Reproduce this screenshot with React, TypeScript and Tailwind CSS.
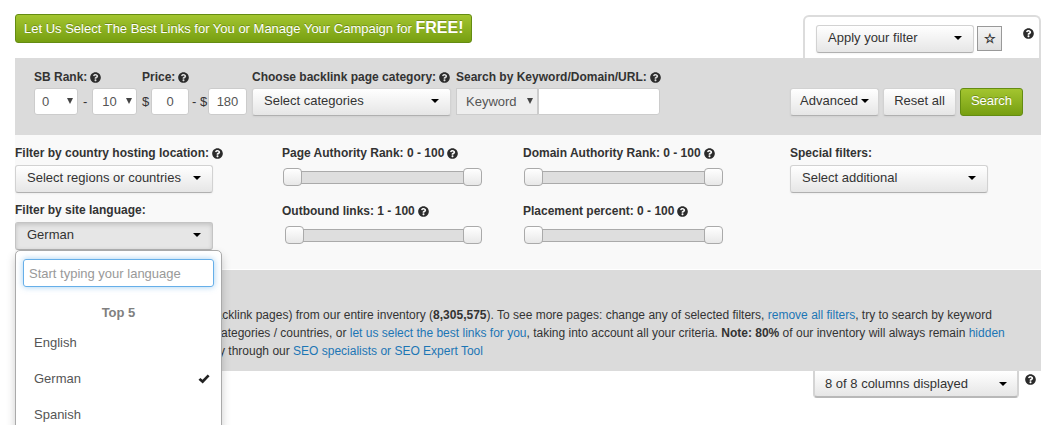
import { useState, type ReactNode } from "react";
import { FaQuestionCircle } from "react-icons/fa";

const greenButton =
  "rounded-[3px] border border-[#648c12] bg-gradient-to-b from-[#a3c52f] to-[#779f10] text-white [text-shadow:0_-1px_0_rgba(0,0,0,0.25)]";
const grayButton =
  "h-7 rounded-[3px] border border-[#d2d2d2] border-b-[#b0b0b0] bg-gradient-to-b from-white to-[#e6e6e6] pb-[2px] text-[#333] shadow-[0_1px_2px_rgba(0,0,0,0.05)]";

function Help() {
  return (
    <button type="button" aria-label="Help" className="shrink-0">
      <FaQuestionCircle className="size-[11px] text-[#2b2b2b]" />
    </button>
  );
}

function Caret() {
  return (
    <svg viewBox="0 0 8 4" className="h-1 w-2 shrink-0" aria-hidden="true">
      <path d="M0 0h8L4 4z" fill="#000" />
    </svg>
  );
}

interface LabelProps {
  htmlFor: string;
  help?: boolean;
  children: ReactNode;
}

function Label({ htmlFor, help = true, children }: LabelProps) {
  return (
    <div className="flex h-[18px] items-center gap-[3px]">
      <label htmlFor={htmlFor} className="text-xs font-bold whitespace-nowrap">
        {children}
      </label>
      {help && <Help />}
    </div>
  );
}

interface DropdownProps {
  id: string;
  text: string;
  open?: boolean;
  className?: string;
  onClick?: () => void;
}

function Dropdown({ id, text, open = false, className = "", onClick }: DropdownProps) {
  const look = open
    ? "h-7 rounded-[3px] border border-[#c4c4c4] border-b-[#b0b0b0] bg-[#e6e6e6] pb-[2px] shadow-[inset_0_2px_4px_rgba(0,0,0,0.15)]"
    : grayButton;
  return (
    <button
      id={id}
      type="button"
      aria-expanded={open}
      onClick={onClick}
      className={`${look} flex items-center justify-between px-[11px] whitespace-nowrap ${className}`}
    >
      {text}
      <Caret />
    </button>
  );
}

interface SmallSelectProps {
  id: string;
  label?: string;
  options: string[];
  value: string;
  className: string;
}

function SmallSelect({ id, label, options, value, className }: SmallSelectProps) {
  return (
    <div className="relative">
      <select
        id={id}
        aria-label={label}
        defaultValue={value}
        className={`block h-[27px] appearance-none border border-[#ccc] text-[#555] ${className}`}
      >
        {options.map((option) => (
          <option key={option}>{option}</option>
        ))}
      </select>
      <svg viewBox="0 0 6 6" className="pointer-events-none absolute top-[10px] right-[5px] size-[6px]" aria-hidden="true">
        <path d="M0 0h6L3 6z" fill="#444" />
      </svg>
    </div>
  );
}

const thumb =
  "pointer-events-none absolute inset-0 h-[18px] w-full appearance-none bg-transparent [&::-webkit-slider-thumb]:pointer-events-auto [&::-webkit-slider-thumb]:h-[18px] [&::-webkit-slider-thumb]:w-[19px] [&::-webkit-slider-thumb]:appearance-none [&::-webkit-slider-thumb]:rounded-[4px] [&::-webkit-slider-thumb]:border [&::-webkit-slider-thumb]:border-[#aaa] [&::-webkit-slider-thumb]:bg-gradient-to-b [&::-webkit-slider-thumb]:from-white [&::-webkit-slider-thumb]:to-[#e8e8e8]";

interface RangeFilterProps {
  id: string;
  title: string;
  start?: number;
}

function RangeFilter({ id, title, start = 0 }: RangeFilterProps) {
  const [low, setLow] = useState(start);
  const [high, setHigh] = useState(100);

  return (
    <div>
      <Label htmlFor={id}>
        {title}: {low} - {high}
      </Label>
      <div className="relative mt-[6px] ml-px flex h-[18px] w-[199px] items-center px-1">
        <div className="h-[13px] w-full border border-[#aaa] bg-[#dedede]" />
        <input
          id={id}
          type="range"
          value={low}
          onChange={(e) => setLow(Math.min(Number(e.target.value), high))}
          className={thumb}
        />
        <input
          type="range"
          aria-label={`${title} maximum`}
          value={high}
          onChange={(e) => setHigh(Math.max(Number(e.target.value), low))}
          className={thumb}
        />
      </div>
    </div>
  );
}

function LanguageMenu({ selected, onSelect }: { selected: string; onSelect: (name: string) => void }) {
  const languages = ["English", "German", "Spanish"];
  return (
    <div className="absolute top-full left-0 z-10 w-[207px] rounded-[5px] border border-[#aaa] bg-white px-[7px] pt-2 pb-2 shadow-[0_5px_10px_rgba(0,0,0,0.2)]">
      <input
        type="text"
        aria-label="Start typing your language"
        placeholder="Start typing your language"
        className="block h-7 w-[191px] rounded-[3px] border border-[#66afe9] px-[5px] shadow-[0_0_6px_rgba(102,175,233,0.6)] outline-none placeholder:text-[#999]"
      />
      <div className="mt-4 mb-[2px] text-center leading-[20px] font-bold text-[#808080]">Top 5</div>
      {languages.map((name) => (
        <button
          key={name}
          type="button"
          onClick={() => onSelect(name)}
          className="flex h-9 w-full items-center justify-between pr-1 pl-[11px] text-[#555]"
        >
          {name}
          {name === selected && (
            <svg viewBox="0 0 12 10" className="h-[10px] w-3" aria-hidden="true">
              <path d="M0.5 5.8 2.4 3.9 4.5 5.7 9.7 0.4 11.6 2.3 4.7 9.6z" fill="#222" />
            </svg>
          )}
        </button>
      ))}
    </div>
  );
}

export default function App() {
  const [language, setLanguage] = useState("German");
  const [menuOpen, setMenuOpen] = useState(true);
  const ranks = Array.from({ length: 11 }, (_, i) => String(i));
  const link = "text-[#1c76b5]";

  return (
    <main className="min-h-screen overflow-hidden bg-white pr-[14px] pl-[15px] font-['Liberation_Sans',Arial,sans-serif] text-[13px] leading-[18px] text-[#333]">
      <header className="flex h-[58px] items-end justify-between">
        <button
          type="button"
          className={`${greenButton} mb-[15px] flex h-[29px] items-baseline px-2 leading-[27px] whitespace-nowrap`}
        >
          Let Us Select The Best Links for You or Manage Your Campaign for&nbsp;
          <strong className="text-base leading-[25px]">FREE!</strong>
        </button>
        <div className="flex h-[43px] w-[238px] rounded-t-[6px] border-2 border-b-0 border-[#dcdcdc] pt-2 pl-[11px]">
          <Dropdown id="saved-filter" text="Apply your filter" className="w-[158px]" />
          <button
            type="button"
            aria-label="Save filter"
            className="mt-px ml-[3px] h-[25px] w-[25px] border border-[#999] bg-gradient-to-b from-[#f6f6f6] to-[#dedede] leading-[22px] font-bold"
          >
            ☆
          </button>
          <div className="ml-auto flex h-4 items-center pr-[5px]">
            <Help />
          </div>
        </div>
      </header>

      <form className="flex h-[77px] items-start bg-[#dbdbdb] pt-[10px] pr-[18px] pl-[19px]" onSubmit={(e) => e.preventDefault()}>
        <div className="w-[108px]">
          <Label htmlFor="rank-from">SB Rank:</Label>
          <div className="mt-[2px] flex items-center gap-[5px]">
            <SmallSelect id="rank-from" options={ranks} value="0" className="w-11 rounded-[3px] bg-white pl-[7px]" />
            -
            <SmallSelect id="rank-to" label="SB Rank to" options={ranks} value="10" className="w-[45px] rounded-[3px] bg-white pl-[9px]" />
          </div>
        </div>
        <div className="w-[110px]">
          <Label htmlFor="price-from">Price:</Label>
          <div className="mt-[2px] flex items-center">
            <span className="w-[9px]">$</span>
            <input id="price-from" defaultValue="0" className="h-[27px] w-[38px] rounded-[3px] border border-[#ccc] bg-white text-center text-[#555]" />
            <span className="w-[19px] pl-[3px] whitespace-nowrap">- $</span>
            <input aria-label="Price to" defaultValue="180" className="h-[27px] w-[39px] rounded-[3px] border border-[#ccc] bg-white text-center text-[#555]" />
          </div>
        </div>
        <div className="w-[204px]">
          <Label htmlFor="category">Choose backlink page category:</Label>
          <Dropdown id="category" text="Select categories" className="mt-[2px] w-[199px]" />
        </div>
        <div>
          <Label htmlFor="keyword">Search by Keyword/Domain/URL:</Label>
          <div className="mt-[2px] flex">
            <SmallSelect id="keyword-type" label="Search by" options={["Keyword", "Domain", "URL"]} value="Keyword" className="w-[82px] bg-[#eee] pl-[9px]" />
            <input id="keyword" className="h-[27px] w-[122px] rounded-r-[3px] border border-[#ccc] bg-white px-2" />
          </div>
        </div>
        <div className="mt-5 ml-auto flex gap-1">
          <button type="button" className={`${grayButton} flex w-[89px] items-center justify-center gap-[3px]`}>
            Advanced
            <Caret />
          </button>
          <button type="reset" className={`${grayButton} w-[73px]`}>
            Reset all
          </button>
          <button type="submit" className={`${greenButton} h-7 w-[63px] pb-[2px]`}>
            Search
          </button>
        </div>
      </form>

      <section className="grid h-[134px] grid-cols-[267fr_241fr_267fr_251fr] bg-[#f9f9f9] pt-[9px]">
        <div>
          <Label htmlFor="country">Filter by country hosting location:</Label>
          <Dropdown id="country" text="Select regions or countries" className="mt-[3px] w-[198px]" />
          <div className="mt-2">
            <Label htmlFor="language" help={false}>
              Filter by site language:
            </Label>
          </div>
          <div className="relative mt-[3px]">
            <Dropdown id="language" text={language} open={menuOpen} onClick={() => setMenuOpen(!menuOpen)} className="w-[198px]" />
            {menuOpen && <LanguageMenu selected={language} onSelect={setLanguage} />}
          </div>
        </div>
        <div className="flex flex-col gap-4">
          <RangeFilter id="page-authority" title="Page Authority Rank" />
          <RangeFilter id="outbound" title="Outbound links" start={1} />
        </div>
        <div className="flex flex-col gap-4">
          <RangeFilter id="domain-authority" title="Domain Authority Rank" />
          <RangeFilter id="placement" title="Placement percent" />
        </div>
        <div>
          <Label htmlFor="special" help={false}>
            Special filters:
          </Label>
          <Dropdown id="special" text="Select additional" className="mt-[3px] w-[198px]" />
        </div>
      </section>

      <section className="mt-px h-[101px] bg-[#dbdbdb] pt-9 text-xs leading-[18px] whitespace-nowrap">
        <p className="pl-[194px]">
          backlink pages) from our entire inventory (<b>8,305,575</b>). To see more pages: change any of selected filters,{" "}
          <a href="#reset" className={link}>remove all filters</a>, try to search by keyword
        </p>
        <p className="pl-[200px]">
          categories / countries, or <a href="#select" className={link}>let us select the best links for you</a>, taking into account all
          your criteria. <b>Note: 80%</b> of our inventory will always remain <a href="#hidden" className={link}>hidden</a>
        </p>
        <p className="pl-[172px]">
          directly through our <a href="#seo" className={link}>SEO specialists or SEO Expert Tool</a>
        </p>
      </section>

      <div className="flex justify-end gap-[6px] pr-[5px]">
        <button
          type="button"
          className="flex h-[27px] w-[206px] items-center justify-between rounded-b-[4px] border-2 border-t-0 border-[#d4d4d4] border-b-[#b8b8b8] bg-gradient-to-b from-white to-[#e6e6e6] px-[10px]"
        >
          8 of 8 columns displayed
          <Caret />
        </button>
        <div className="flex h-4 items-center">
          <Help />
        </div>
      </div>
    </main>
  );
}
